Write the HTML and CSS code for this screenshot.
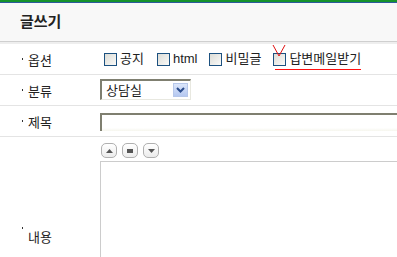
FILE: index.html
```html
<!DOCTYPE html>
<html lang="ko">
<head>
  <meta charset="UTF-8" />
  <title>글쓰기</title>
  <link rel="stylesheet" href="styles.css">
</head>
<body>
  <div class="board">
    <div class="board-title">글쓰기</div>

    <div class="form">
      <div class="row">
        <div class="label">옵션</div>
        <div class="field options">
          <label class="opt"><span class="chk"></span>공지</label>
          <label class="opt"><span class="chk"></span>html</label>
          <label class="opt"><span class="chk"></span>비밀글</label>
          <label class="opt opt-mail">
            <svg class="mark" width="14" height="13" viewBox="0 0 14 13"><path d="M1 1 L7 12 L13 1" fill="none" stroke="#e01010" stroke-width="1"/></svg>
            <span class="chk"></span>답변메일받기
            <span class="mail-line"></span>
          </label>
        </div>
      </div>

      <div class="row">
        <div class="label">분류</div>
        <div class="field">
          <div class="select">
            <span class="select-text">상담실</span>
            <span class="select-btn">
              <svg width="9" height="6" viewBox="0 0 9 6"><path d="M1 1 L4.5 4.5 L8 1" fill="none" stroke="#2a4c8c" stroke-width="2"/></svg>
            </span>
          </div>
        </div>
      </div>

      <div class="row">
        <div class="label">제목</div>
        <div class="field">
          <div class="text-input"></div>
        </div>
      </div>

      <div class="row row-content">
        <div class="label">내용</div>
        <div class="field editor">
          <div class="editor-tools">
            <span class="tool"><svg width="7" height="4" viewBox="0 0 7 4"><path d="M0 4 L3.5 0 L7 4 Z" fill="#555"/></svg></span>
            <span class="tool"><svg width="6" height="4" viewBox="0 0 6 4"><rect width="6" height="4" fill="#555"/></svg></span>
            <span class="tool"><svg width="7" height="4" viewBox="0 0 7 4"><path d="M0 0 L3.5 4 L7 0 Z" fill="#555"/></svg></span>
          </div>
          <div class="textarea"></div>
        </div>
      </div>
    </div>
  </div>
</body>
</html>
```

FILE: styles.css
```css
html, body {
  margin: 0;
  padding: 0;
  background: #fff;
  overflow: hidden;
}

body {
  font-family: "Liberation Sans", "Noto Sans CJK KR", sans-serif;
  font-size: 12px;
  color: #222;
}

.board {
  border-top: 2px solid #16932c;
}

.board-title {
  height: 38px;
  line-height: 38px;
  padding-left: 20px;
  background: #f8f8f8;
  border-top: 1px solid #2c5a9c;
  border-bottom: 1px solid #cfcfcf;
  font-size: 15px;
  font-weight: bold;
  color: #222;
}

.form {
  border-top: 2px solid #eeeeee;
}

.row {
  display: grid;
  grid-template-columns: 100px 1fr;
  height: 30px;
  border-bottom: 1px solid #e4e4e4;
}

.label {
  display: flex;
  align-items: center;
  padding-left: 22px;
  gap: 5px;
  font-size: 13px;
}

.label::before {
  content: "";
  width: 1px;
  height: 2px;
  background: #333;
}

.field {
  display: flex;
  align-items: center;
}

.opt {
  position: relative;
  display: flex;
  align-items: center;
  height: 16px;
  line-height: 16px;
  margin-left: 4px;
  margin-right: 9px;
  font-size: 13px;
}

.opt:nth-child(2),
.opt:nth-child(3) { margin-right: 8px; }

.chk {
  width: 11px;
  height: 11px;
  border: 1px solid #1c5180;
  background: linear-gradient(135deg, #dcdcd6, #fafaf8);
  margin-right: 3px;
}

.mail-line {
  position: absolute;
  left: 2px;
  right: 0;
  top: 18px;
  height: 0;
  border-top: 1px solid #ff1010;
}

.mark {
  position: absolute;
  left: -1px;
  top: -7px;
}

.select {
  display: flex;
  align-items: center;
  width: 88px;
  height: 18px;
  margin-top: -2px;
  border-top: 2px solid #7f7f70;
  border-left: 2px solid #7f7f70;
  border-right: 1px solid #e8e8e0;
  border-bottom: 1px solid #e8e8e0;
  background: #fff;
  font-size: 13px;
}

.select-text {
  flex: 1;
  padding-left: 4px;
}

.select-btn {
  display: flex;
  align-items: center;
  justify-content: center;
  width: 15px;
  height: 14px;
  margin-right: 2px;
  background: linear-gradient(#dbe6fb, #b5c8f0);
  border: 1px solid #b6c7ea;
  box-sizing: border-box;
}

.text-input {
  width: 100%;
  height: 16px;
  margin-top: 2px;
  border-top: 2px solid #7f7f70;
  border-left: 2px solid #7f7f70;
  background: linear-gradient(#fff 80%, #f6f6ee);
}

.row-content {
  height: auto;
  border-bottom: none;
}

.row-content .label {
  align-items: flex-start;
  padding-top: 90px;
}

.editor {
  flex-direction: column;
  align-items: flex-start;
  padding-top: 6px;
}

.editor-tools {
  display: flex;
  gap: 5px;
  margin-left: 1px;
}

.tool {
  display: flex;
  align-items: center;
  justify-content: center;
  width: 14px;
  height: 13px;
  border: 1px solid #b0b0b0;
  border-radius: 5px;
  background: linear-gradient(#ffffff, #ececec);
}

.textarea {
  width: 320px;
  height: 140px;
  margin-top: 3px;
  border: 1px solid #cccccc;
  background: #fff;
}
```
